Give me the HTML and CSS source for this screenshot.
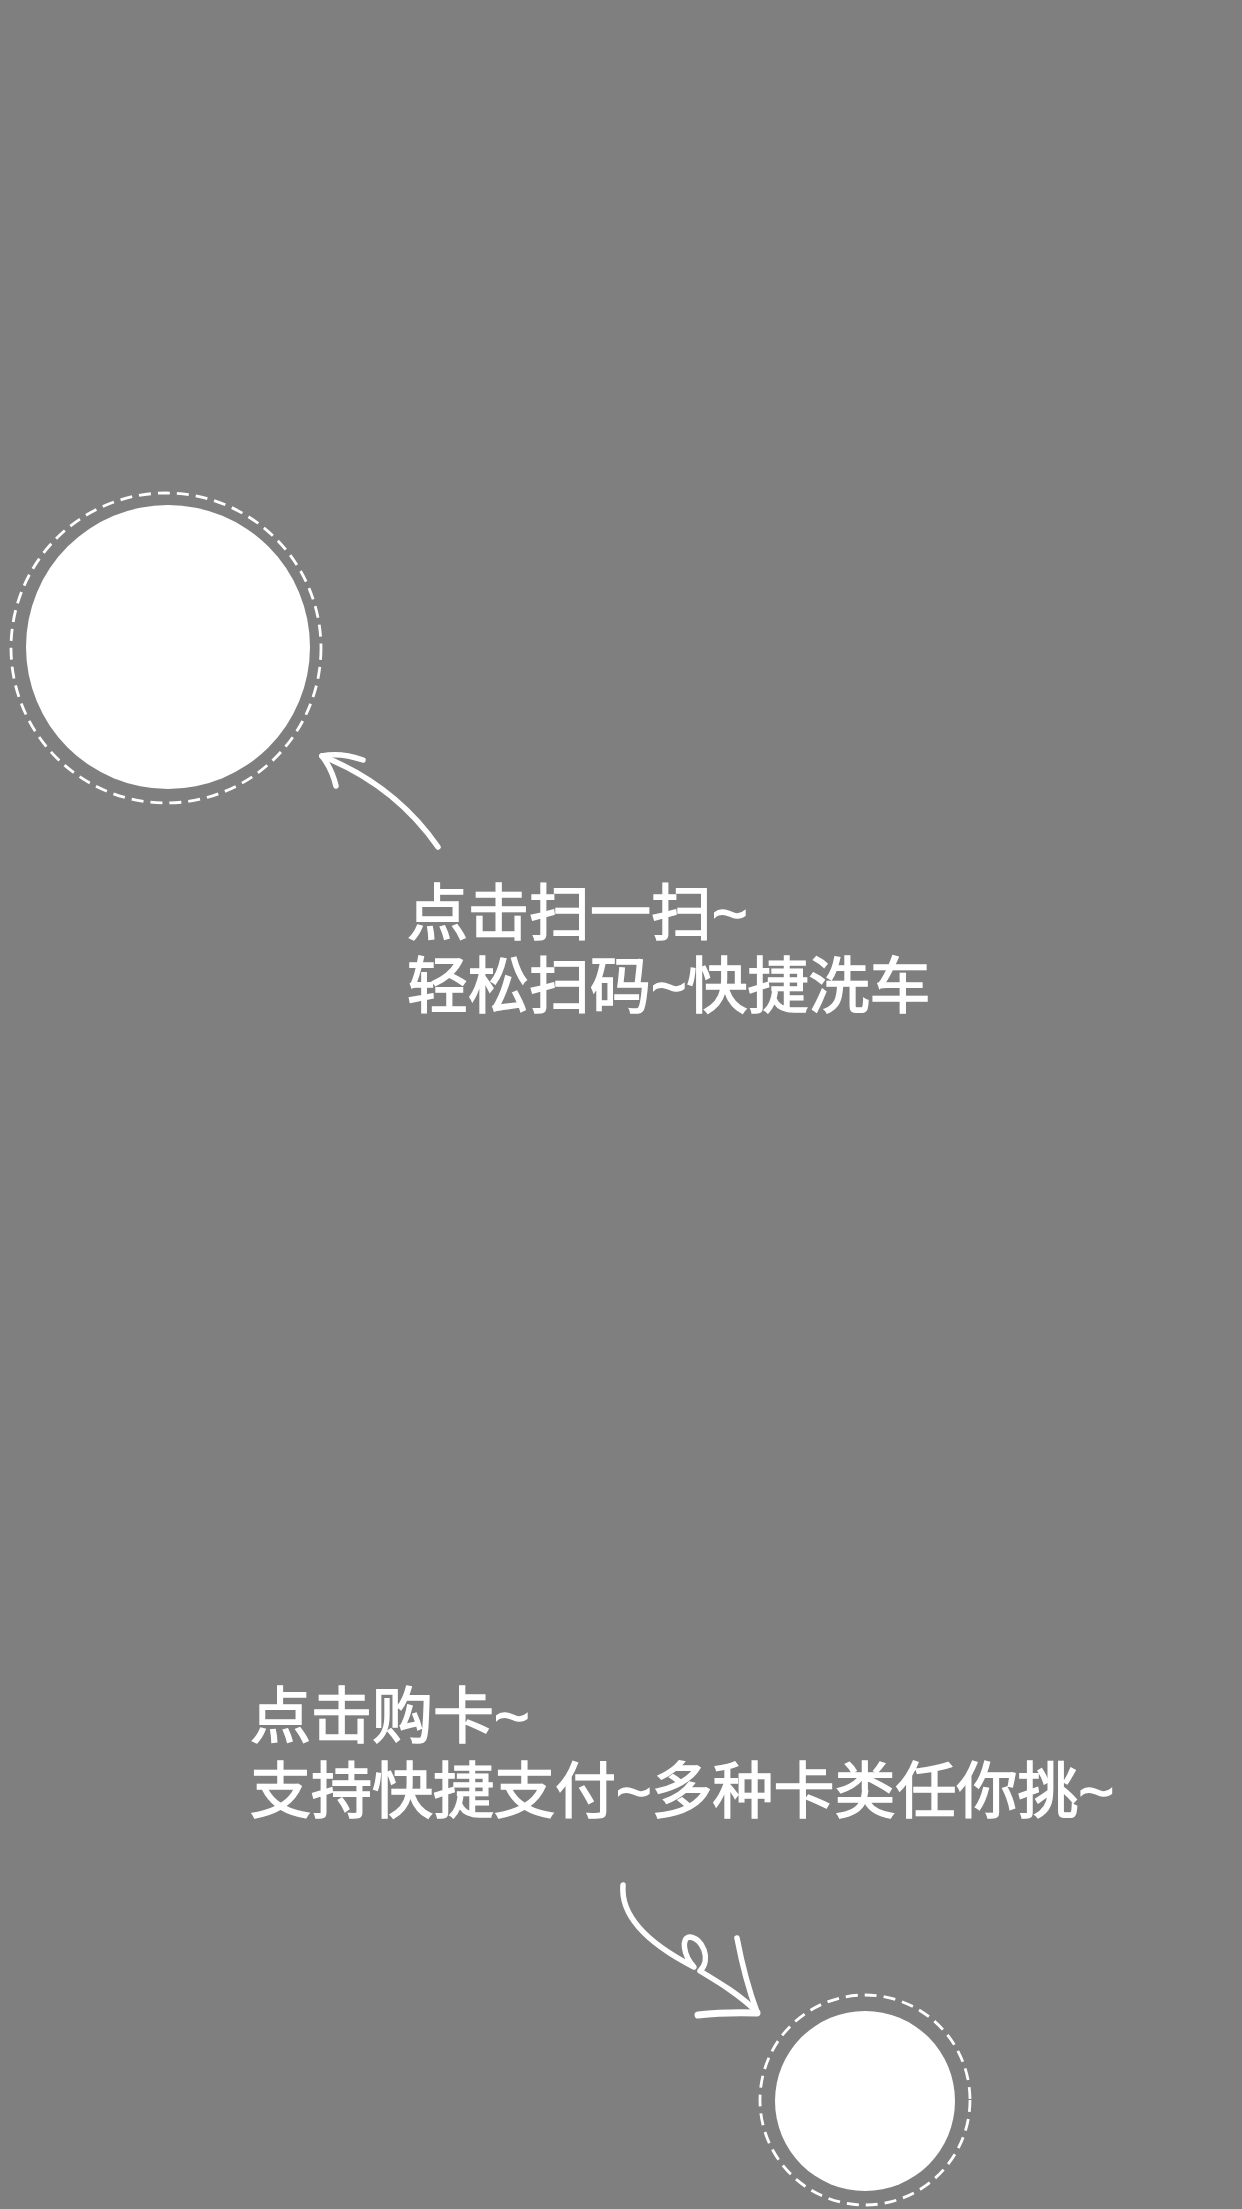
FILE: index.html
```html
<!DOCTYPE html>
<html lang="zh-CN">
<head>
    <meta charset="UTF-8">
    <meta name="viewport" content="width=device-width, initial-scale=1.0">
    <title>新手引导</title>
    <link rel="stylesheet" href="styles.css">
</head>
<body>
<div class="guide">
    <!-- 第一步：扫一扫 -->
    <svg class="spot spot-scan" viewBox="0 0 320 320">
        <circle class="ring" cx="158" cy="158" r="155"></circle>
        <circle class="hole" cx="160" cy="157" r="142"></circle>
    </svg>
    <svg class="arrow arrow-scan" viewBox="0 0 140 110">
        <path d="M12,11 Q85,40 128,102"></path>
        <path d="M12,11 Q30,7 53,15"></path>
        <path d="M12,11 Q22,24 26,41"></path>
    </svg>
    <p class="tip tip-scan">点击扫一扫~<br>轻松扫码~快捷洗车</p>

    <!-- 第二步：购卡 -->
    <p class="tip tip-card">点击购卡~<br>支持快捷支付~多种卡类任你挑~</p>
    <svg class="arrow arrow-card" viewBox="0 0 160 150">
        <path d="M13,10 C10,45 45,72 84,92 C73,80 71,62 80,62 C92,63 102,84 90,96 C110,108 130,120 147,137"></path>
        <path d="M127,63 Q135,105 147,137"></path>
        <path class="thick" d="M88,140 Q115,137 147,138"></path>
    </svg>
    <svg class="spot spot-card" viewBox="0 0 220 220">
        <circle class="ring" cx="110" cy="110" r="105"></circle>
        <circle class="hole" cx="110" cy="111" r="90"></circle>
    </svg>
</div>
</body>
</html>
```

FILE: styles.css
```css
* {
    box-sizing: border-box;
}

html, body {
    margin: 0;
    height: 100%;
}

body {
    background-color: #fff;
    font-family: "Liberation Sans", "Noto Sans CJK SC", sans-serif;
}

.guide {
    position: relative;
    width: 100%;
    min-height: 100vh;
    overflow: hidden;
    background-color: rgba(0, 0, 0, 0.5);
}

.spot {
    position: absolute;
    display: block;
}

.spot .ring {
    fill: none;
    stroke: #fff;
    stroke-width: 2.8;
    stroke-dasharray: 12 7;
}

.spot .hole {
    fill: #fff;
}

.spot-scan {
    left: 8px;
    top: 490px;
    width: 320px;
    height: 320px;
}

.spot-card {
    left: 755px;
    top: 1990px;
    width: 220px;
    height: 220px;
}

.arrow {
    position: absolute;
    display: block;
    overflow: visible;
}

.arrow path {
    fill: none;
    stroke: #fff;
    stroke-width: 5.5;
    stroke-linecap: round;
    stroke-linejoin: round;
}

.arrow path.thick {
    stroke-width: 7;
}

.arrow-scan {
    left: 310px;
    top: 745px;
    width: 140px;
    height: 110px;
}

.arrow-card {
    left: 610px;
    top: 1875px;
    width: 160px;
    height: 150px;
}

/* 常规字重略加描边，接近设计稿的中粗体 */
.tip {
    position: absolute;
    margin: 0;
    color: #fff;
    font-size: 61px;
    font-weight: 400;
    -webkit-text-stroke: 1.5px #fff;
    white-space: nowrap;
}

.tip-scan {
    left: 407px;
    top: 878px;
    line-height: 73px;
}

.tip-card {
    left: 250px;
    top: 1680px;
    line-height: 75px;
}
```
